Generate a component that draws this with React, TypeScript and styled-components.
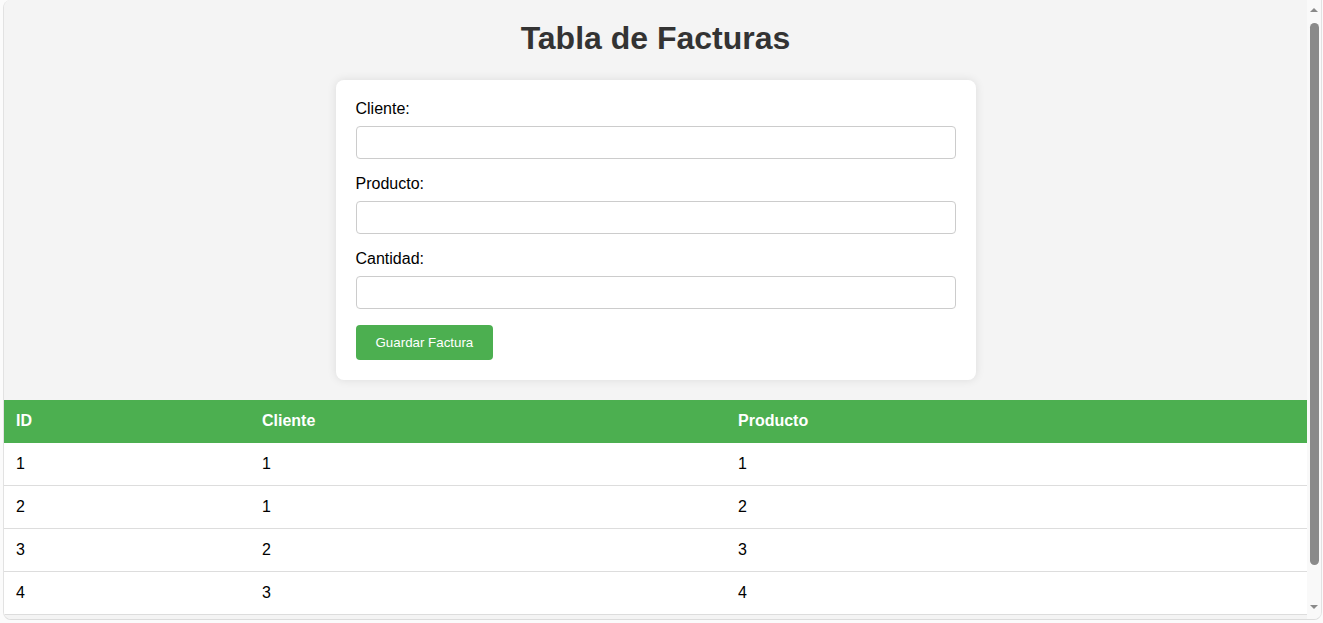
import React from "react";
import styled, { createGlobalStyle } from "styled-components";

const GlobalStyle = createGlobalStyle`
  html, body {
    margin: 0;
    height: 100%;
    overflow: hidden;
    background: #fbfbfb;
  }
  * {
    box-sizing: border-box;
  }
`;

const Window = styled.div`
  display: flex;
  margin: 0 1px 0 3px;
  height: 620px;
  border-left: 1px solid #e2e2e2;
  border-bottom: 1px solid #dcdcdc;
  border-right: 1px solid #e2e2e2;
  border-radius: 8px 0 8px 8px;
  overflow: hidden;
  background: #f4f4f4;
`;

const Viewport = styled.div`
  flex: 1;
  min-width: 0;
  height: 100%;
  overflow: hidden;
  font-family: "Liberation Sans", Arial, sans-serif;
  background: #f4f4f4;
`;

const ScrollBar = styled.div`
  width: 14px;
  flex: none;
  display: flex;
  flex-direction: column;
  align-items: center;
  background: #f9f9f9;
  padding: 8px 0 10px;
`;

const Arrow = styled.div<{ $down?: boolean }>`
  width: 0;
  height: 0;
  border-left: 4px solid transparent;
  border-right: 4px solid transparent;
  ${(p) =>
    p.$down
      ? "border-top: 4px solid #8a8a8a;"
      : "border-bottom: 4px solid #8a8a8a;"}
`;

const Track = styled.div`
  flex: 1;
  width: 100%;
  display: flex;
  justify-content: center;
  padding: 11px 0 40px;
`;

const Thumb = styled.div`
  width: 9px;
  height: 100%;
  border-radius: 5px;
  background: #8a8a8a;
`;

const Title = styled.h1`
  margin: 0;
  padding: 20px 0 23px;
  text-align: center;
  font-size: 32px;
  line-height: 37px;
  font-weight: bold;
  color: #333;
`;

const Card = styled.form`
  width: 640px;
  margin: 0 auto 20px;
  padding: 20px;
  background: #fff;
  border-radius: 8px;
  box-shadow: 0 0 10px rgba(0, 0, 0, 0.1);
`;

const Label = styled.label`
  display: block;
  margin-bottom: 8px;
  font-size: 16px;
  line-height: 18.4px;
  color: #000;
`;

const Input = styled.input`
  display: block;
  width: 100%;
  height: 33px;
  margin: 0 0 15.5px;
  padding: 8px;
  border: 1px solid #ccc;
  border-radius: 4px;
  font-family: "Liberation Sans", Arial, sans-serif;
  font-size: 13.33px;
  background: #fff;
`;

const Button = styled.button`
  display: block;
  margin-top: 0.5px;
  height: 35px;
  padding: 0 20px;
  border: none;
  border-radius: 4px;
  background: #4caf50;
  color: #fff;
  font-family: "Liberation Sans", Arial, sans-serif;
  font-size: 13.33px;
  cursor: pointer;
`;

const Table = styled.table`
  width: 100%;
  border-collapse: collapse;
  background: #fff;
  font-size: 16px;
`;

const HeadCell = styled.th<{ $w?: number }>`
  ${(p) => (p.$w ? `width: ${p.$w}px;` : "")}
  padding: 0 12px;
  height: 43px;
  line-height: 18px;
  text-align: left;
  background: #4caf50;
  color: #fff;
  font-weight: bold;
`;

const Row = styled.tr`
  border-bottom: 1px solid #ddd;
`;

const Cell = styled.td`
  padding: 0 12px;
  height: 43px;
  line-height: 18px;
  color: #000;
`;

const rows = [
  [1, 1, 1],
  [2, 1, 2],
  [3, 2, 3],
  [4, 3, 4],
];

export default function App() {
  return (
    <>
      <GlobalStyle />
      <Window>
        <Viewport>
          <Title>Tabla de Facturas</Title>
          <Card onSubmit={(e) => e.preventDefault()}>
            <Label htmlFor="cliente">Cliente:</Label>
            <Input id="cliente" type="text" />
            <Label htmlFor="producto">Producto:</Label>
            <Input id="producto" type="text" />
            <Label htmlFor="cantidad">Cantidad:</Label>
            <Input id="cantidad" type="number" />
            <Button type="submit">Guardar Factura</Button>
          </Card>
          <Table>
            <thead>
              <tr>
                <HeadCell $w={246}>ID</HeadCell>
                <HeadCell $w={476}>Cliente</HeadCell>
                <HeadCell>Producto</HeadCell>
              </tr>
            </thead>
            <tbody>
              {rows.map((r) => (
                <Row key={r[0]}>
                  <Cell>{r[0]}</Cell>
                  <Cell>{r[1]}</Cell>
                  <Cell>{r[2]}</Cell>
                </Row>
              ))}
            </tbody>
          </Table>
        </Viewport>
        <ScrollBar aria-hidden>
          <Arrow />
          <Track>
            <Thumb />
          </Track>
          <Arrow $down />
        </ScrollBar>
      </Window>
    </>
  );
}
